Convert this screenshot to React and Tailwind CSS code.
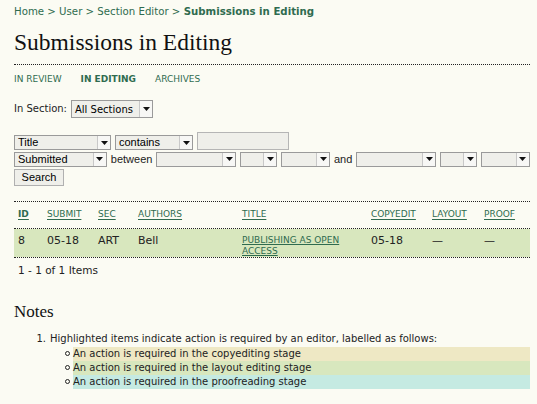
import React from 'react';

const verdana = { fontFamily: '"DejaVu Sans", Verdana, sans-serif' };

function Select({ label = '', width, font = 'arial', tall = false }) {
  return (
    <span
      className={`inline-flex items-stretch border border-[#9a9a9a] bg-[#efefea] leading-[13px] text-black ${
        tall ? 'h-[18px] text-[10px]' : 'h-[15px] text-[11px]'
      } ${font === 'arial' ? 'font-["Liberation_Sans",Arial,sans-serif]' : 'font-["DejaVu_Sans",Verdana,sans-serif]'}`}
      style={{ width }}
    >
      <span className="flex flex-1 items-center overflow-hidden whitespace-nowrap pl-[3px]">{label}</span>
      <span className="flex w-[13px] items-center justify-center border-l border-[#c8c8c8] bg-[#f7f7f5]">
        <svg width="7" height="4" viewBox="0 0 7 4">
          <path d="M0 0h7L3.5 4z" fill="#111" />
        </svg>
      </span>
    </span>
  );
}

const cols = [
  { h: 'ID', w: 29 },
  { h: 'SUBMIT', w: 51 },
  { h: 'SEC', w: 40 },
  { h: 'AUTHORS', w: 104 },
  { h: 'TITLE', w: 129 },
  { h: 'COPYEDIT', w: 61 },
  { h: 'LAYOUT', w: 52 },
  { h: 'PROOF', w: 50 },
];

const notes = [
  { text: 'An action is required in the copyediting stage', bg: 'bg-[#eee8c4]' },
  { text: 'An action is required in the layout editing stage', bg: 'bg-[#d8e7be]' },
  { text: 'An action is required in the proofreading stage', bg: 'bg-[#c5eae2]' },
];

export default function App() {
  return (
    <div className="min-h-[404px] bg-[#fbfbf3] px-[14px] pt-[5px] text-[10px] text-[#222]" style={verdana}>
      <div className="w-[516px]">
        {/* breadcrumb */}
        <div className="text-[10.2px] leading-[14px] text-[#2f6b4f]">
          <span>Home</span> &gt; <span>User</span> &gt; <span>Section Editor</span> &gt;{' '}
          <span className="font-bold">Submissions in Editing</span>
        </div>

        <h1 className="mt-[10px] font-['Liberation_Serif',Georgia,serif] text-[23.5px] leading-[26px] text-[#111]">
          Submissions in Editing
        </h1>

        <div className="mt-[9px] border-t border-dotted border-[#222]" />

        {/* tabs */}
        <div className="mt-[8px] flex gap-[19px] text-[9px] leading-[12px] text-[#2f6b4f]">
          <span>IN REVIEW</span>
          <span className="font-bold">IN EDITING</span>
          <span>ARCHIVES</span>
        </div>

        <div className="mt-[15px] flex items-center gap-[4px] leading-[14px]">
          <span>In Section:</span>
          <Select label="All Sections" width={82} font="verdana" tall />
        </div>

        {/* search form */}
        <div className="mt-[14px] flex flex-col gap-[1px]">
          <div className="flex items-end gap-[4px]">
            <Select label="Title" width={97} />
            <Select label="contains" width={78} />
            <span className="h-[18px] w-[92px] border border-[#b5b5b5] bg-[#efefea]" />
          </div>
          <div className="flex items-center gap-[4px] font-['Liberation_Sans',Arial,sans-serif] text-[11px]">
            <Select label="Submitted" width={93} />
            <span>between</span>
            <Select width={80} />
            <Select width={37} />
            <Select width={49} />
            <span>and</span>
            <Select width={80} />
            <Select width={37} />
            <Select width={49} />
          </div>
          <div>
            <button className="h-[17px] w-[50px] border border-[#b0b0b0] bg-[#efefea] font-['Liberation_Sans',Arial,sans-serif] text-[11px] leading-[14px] text-black">
              Search
            </button>
          </div>
        </div>

        {/* table */}
        <div className="mt-[15px] border-t border-dotted border-[#222]" />
        <div className="flex h-[26px] items-center text-[9px] text-[#2f6b4f]">
          {cols.map((c, i) => (
            <div key={c.h} style={{ width: c.w }} className="pl-[4px]">
              <span className={`underline underline-offset-2 ${i === 0 ? 'font-bold' : ''}`}>{c.h}</span>
            </div>
          ))}
        </div>
        <div className="border-t border-dotted border-[#222]" />
        <div className="flex h-[28px] items-start bg-[#d8e7be] pt-[5px] text-[11px] leading-[14px] text-[#222]">
          <div style={{ width: 29 }} className="pl-[4px]">8</div>
          <div style={{ width: 51 }} className="pl-[4px]">05-18</div>
          <div style={{ width: 40 }} className="pl-[4px]">ART</div>
          <div style={{ width: 104 }} className="pl-[4px]">Bell</div>
          <div style={{ width: 129 }} className="pl-[4px] pt-[1px] text-[9px] leading-[11px] text-[#2f6b4f] underline underline-offset-1">
            PUBLISHING AS OPEN ACCESS
          </div>
          <div style={{ width: 61 }} className="pl-[4px]">05-18</div>
          <div style={{ width: 52 }} className="pl-[4px]">—</div>
          <div style={{ width: 50 }} className="pl-[4px]">—</div>
        </div>
        <div className="border-t border-dotted border-[#222]" />
        <div className="mt-[5px] pl-[4px] text-[10.5px] leading-[14px]">1 - 1 of 1 Items</div>

        {/* notes */}
        <h3 className="mt-[25px] font-['Liberation_Serif',Georgia,serif] text-[17px] leading-[20px] text-[#111]">
          Notes
        </h3>
        <div className="mt-[10px] flex leading-[14px]">
          <span className="w-[35px] pr-[3px] text-right">1.</span>
          <div className="flex-1 pl-[1px]">
            <div>Highlighted items indicate action is required by an editor, labelled as follows:</div>
            <div className="mt-[1px] flex flex-col pl-[15px]">
              {notes.map(n => (
                <div key={n.text} className="flex items-center">
                  <span className="mr-[3px] h-[5px] w-[5px] rounded-full border border-[#222]" />
                  <span className={`flex-1 ${n.bg}`}>{n.text}</span>
                </div>
              ))}
            </div>
          </div>
        </div>
      </div>
    </div>
  );
}
